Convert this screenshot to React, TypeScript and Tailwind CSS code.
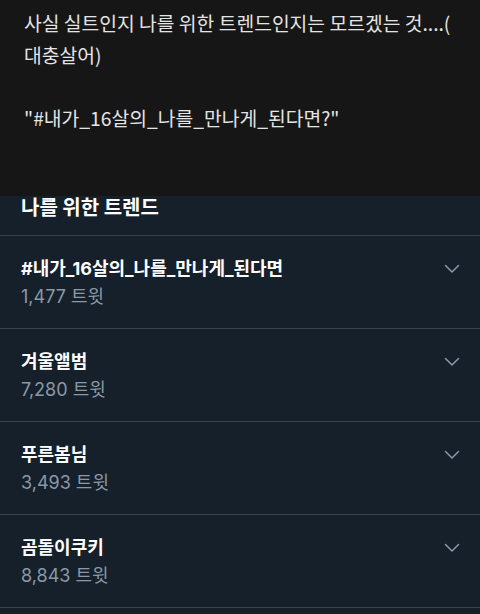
import React from "react";

const rows = [
  { title: "#내가_16살의_나를_만나게_된다면", count: "1,477 트윗" },
  { title: "겨울앨범", count: "7,280 트윗" },
  { title: "푸른봄님", count: "3,493 트윗" },
  { title: "곰돌이쿠키", count: "8,843 트윗" },
];

function Chevron() {
  return (
    <svg width="16" height="10" viewBox="0 0 16 10" fill="none" className="mt-[9px]">
      <path d="M1.5 1.5 L8 8 L14.5 1.5" stroke="#8b98a5" strokeWidth="1.5" strokeLinecap="round" strokeLinejoin="round" />
    </svg>
  );
}

export default function App() {
  return (
    <div
      className="w-[480px] h-[614px] overflow-hidden bg-[#15202b]"
      style={{ fontFamily: '"Noto Sans CJK KR", "Noto Sans", sans-serif' }}
    >
      <div className="h-[196px] bg-[#161616] px-6 pt-[8px] text-[19.3px] leading-[31.5px] text-[#e4e4e4]">
        <p>사실 실트인지 나를 위한 트렌드인지는 모르겠는 것....(</p>
        <p>대충살어)</p>
        <p>&nbsp;</p>
        <p>"#내가_16살의_나를_만나게_된다면?"</p>
      </div>
      <div className="h-[40px] border-b border-[#38444d] px-[21px]">
        <h2 className="text-[20px] leading-[22px] font-bold text-white">나를 위한 트렌드</h2>
      </div>
      {rows.map((r) => (
        <div
          key={r.title}
          className="h-[93px] border-b border-[#38444d] pl-[21px] pr-[20px] pt-[19px] flex justify-between"
          style={{ fontFamily: 'Inter, "Noto Sans CJK KR", sans-serif' }}
        >
          <div>
            <div className="text-[18px] leading-[28px] font-bold text-white">{r.title}</div>
            <div className="text-[18px] leading-[28px] text-[#8b98a5]">{r.count}</div>
          </div>
          <div>
            <Chevron />
          </div>
        </div>
      ))}
    </div>
  );
}
